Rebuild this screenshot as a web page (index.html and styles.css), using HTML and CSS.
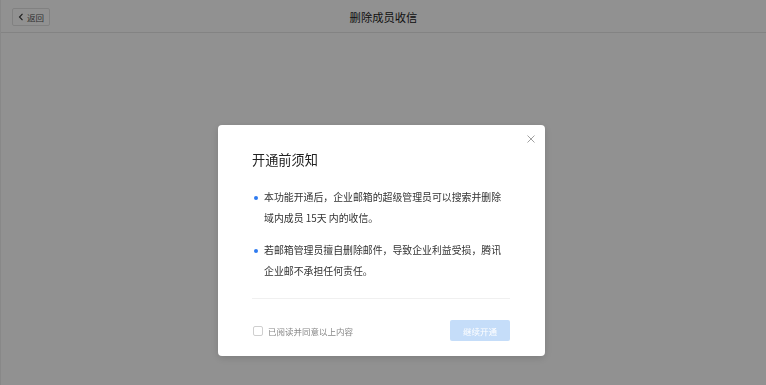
FILE: index.html
```html
<!DOCTYPE html>
<html lang="zh-CN">
<head>
    <meta charset="UTF-8">
    <meta name="viewport" content="width=device-width, initial-scale=1.0">
    <title>删除成员收信</title>
    <link rel="stylesheet" href="styles.css">
</head>
<body>
    <div class="page">
        <div class="header">
            <button type="button" class="back-btn">
                <svg width="6" height="8" viewBox="0 0 6 8"><path d="M4.5 0.8 L1.5 4 L4.5 7.2" fill="none" stroke="#333" stroke-width="1.1"/></svg>
                <span>返回</span>
            </button>
            <h1 class="header-title">删除成员收信</h1>
        </div>
        <div class="content"></div>
    </div>

    <div class="overlay">
        <div class="modal">
            <span class="close-btn">
                <svg width="8" height="8" viewBox="0 0 8 8"><path d="M0.5 0.5 L7.5 7.5 M7.5 0.5 L0.5 7.5" stroke="#a0a0a0" stroke-width="1"/></svg>
            </span>
            <h2 class="modal-title">开通前须知</h2>
            <ul class="notice-list">
                <li>本功能开通后，企业邮箱的超级管理员可以搜索并删除域内成员 15天 内的收信。</li>
                <li>若邮箱管理员擅自删除邮件，导致企业利益受损，腾讯企业邮不承担任何责任。</li>
            </ul>
            <div class="modal-footer">
                <label class="agree">
                    <span class="checkbox"></span>
                    <span>已阅读并同意以上内容</span>
                </label>
                <button type="button" class="open-btn" disabled>继续开通</button>
            </div>
        </div>
    </div>
</body>
</html>
```

FILE: styles.css
```css
* {
    box-sizing: border-box;
}

body {
    margin: 0;
    font-family: "Noto Sans CJK SC", "Noto Sans", sans-serif;
    background-color: #fff;
    color: #333;
}

.page {
    height: 385px;
    border-left: 1px solid #f0f0f0;
}

.header {
    height: 33px;
    border-bottom: 1px solid #e6e6e6;
    display: flex;
    align-items: center;
    justify-content: center;
    position: relative;
}

.back-btn {
    position: absolute;
    left: 11px;
    top: 8px;
    width: 38px;
    height: 18px;
    padding: 0 0 0 5px;
    display: flex;
    align-items: center;
    gap: 3px;
    background: #fff;
    border: 1px solid #e3e3e3;
    border-radius: 2px;
    font-family: inherit;
    font-size: 8.5px;
    color: #555;
}

.header-title {
    margin: 2px 0 0;
    font-size: 11.3px;
    font-weight: normal;
    color: #222;
}

.overlay {
    position: fixed;
    inset: 0;
    background-color: rgba(0, 0, 0, 0.43);
    display: flex;
    justify-content: center;
    align-items: flex-start;
    padding-top: 125px;
}

.modal {
    position: relative;
    width: 327px;
    margin-right: 3px;
    background-color: #fff;
    border-radius: 4px;
    padding: 26px 35px 15px 34px;
    box-shadow: 0 2px 8px rgba(0, 0, 0, 0.15);
}

.close-btn {
    position: absolute;
    top: 10px;
    right: 10px;
    display: flex;
}

.modal-title {
    margin: 0;
    font-size: 13.2px;
    line-height: 18px;
    font-weight: normal;
    color: #222;
}

.notice-list {
    list-style: none;
    margin: 18px 0 0;
    padding: 0 0 17px;
    border-bottom: 1px solid #f0f0f0;
}

.notice-list li {
    position: relative;
    padding: 0 6px 0 12px;
    font-size: 9.9px;
    line-height: 20.5px;
    color: #333;
}

.notice-list li + li {
    margin-top: 12px;
}

.notice-list li::before {
    content: "";
    position: absolute;
    left: 2px;
    top: 8.5px;
    width: 4px;
    height: 4px;
    border-radius: 50%;
    background-color: #2f7bf0;
}

.modal-footer {
    display: flex;
    align-items: center;
    justify-content: space-between;
    margin-top: 21px;
}

.agree {
    display: flex;
    align-items: center;
    gap: 5px;
    padding-left: 1px;
    font-size: 8.5px;
    color: #888;
}

.checkbox {
    width: 10px;
    height: 10px;
    border: 1px solid #cfcfcf;
    border-radius: 2px;
    background: #fff;
}

.open-btn {
    width: 60px;
    height: 21px;
    border: none;
    border-radius: 2px;
    background-color: #c5ddf9;
    color: #fff;
    font-family: inherit;
    font-size: 8.5px;
    padding: 0;
}
```
